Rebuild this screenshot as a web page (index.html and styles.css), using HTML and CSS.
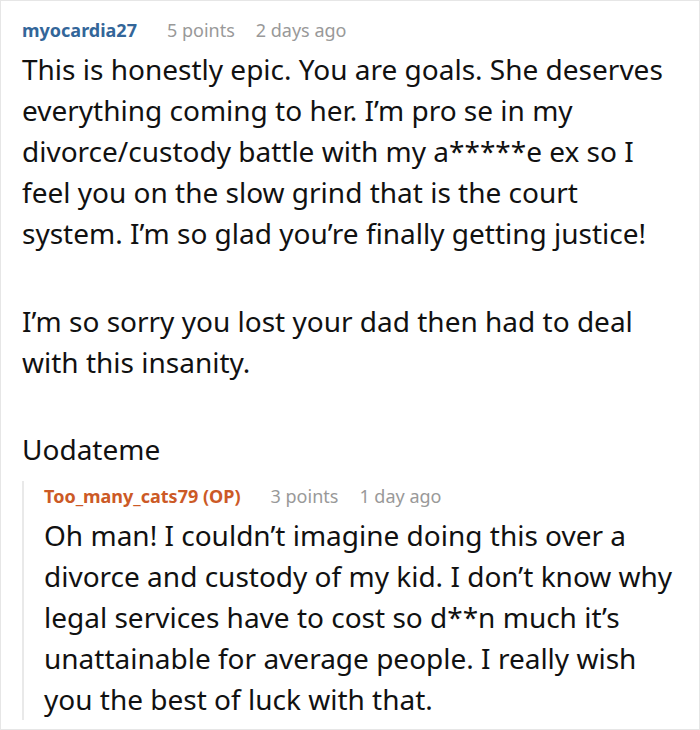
FILE: index.html
```html
<!DOCTYPE html>
<html>
<head>
<meta charset="utf-8">
<link rel="stylesheet" href="styles.css">
</head>
<body>
<div class="comment">
  <div class="meta">
    <span class="user">myocardia27</span>
    <span class="info">5 points</span>
    <span class="info">2 days ago</span>
  </div>
  <div class="body">
    <p>This is honestly epic. You are goals. She deserves everything coming to her. I’m pro se in my divorce/custody battle with my a*****e ex so I feel you on the slow grind that is the court system. I’m so glad you’re finally getting justice!</p>
    <p class="p2">I’m so sorry you lost your dad then had to deal with this insanity.</p>
    <p class="p3">Uodateme</p>
  </div>
  <div class="reply">
    <div class="meta">
      <span class="user op">Too_many_cats79 (OP)</span>
      <span class="info">3 points</span>
      <span class="info">1 day ago</span>
    </div>
    <div class="body">
      <p>Oh man! I couldn’t imagine doing this over a divorce and custody of my kid. I don’t know why legal services have to cost so d**n much it’s unattainable for average people. I really wish you the best of luck with that.</p>
    </div>
  </div>
</div>
</body>
</html>
```

FILE: styles.css
```css
html, body {
  margin: 0;
  padding: 0;
  background: #fff;
}
body {
  font-family: "Noto Sans", sans-serif;
  color: #111;
}
.comment {
  box-sizing: border-box;
  width: 700px;
  height: 730px;
  border: 1px solid #e6e6e6;
  padding: 14px 20px 0 21px;
  overflow: hidden;
}
.meta {
  display: flex;
  font-size: 18px;
  line-height: 30px;
}
.user {
  font-weight: bold;
  color: #336699;
  margin-right: 30px;
}
.user.op {
  color: #cc5a26;
}
.info {
  color: #999;
  margin-right: 21px;
}
.body {
  margin-top: 4px;
}
.body p {
  margin: 0;
  font-size: 28px;
  line-height: 41px;
}
.body .p2 {
  margin-top: 47px;
}
.body .p3 {
  margin-top: 46px;
}
.reply {
  margin-top: 11px;
  border-left: 2px solid #e9e9e9;
  padding-left: 20px;
}
```
